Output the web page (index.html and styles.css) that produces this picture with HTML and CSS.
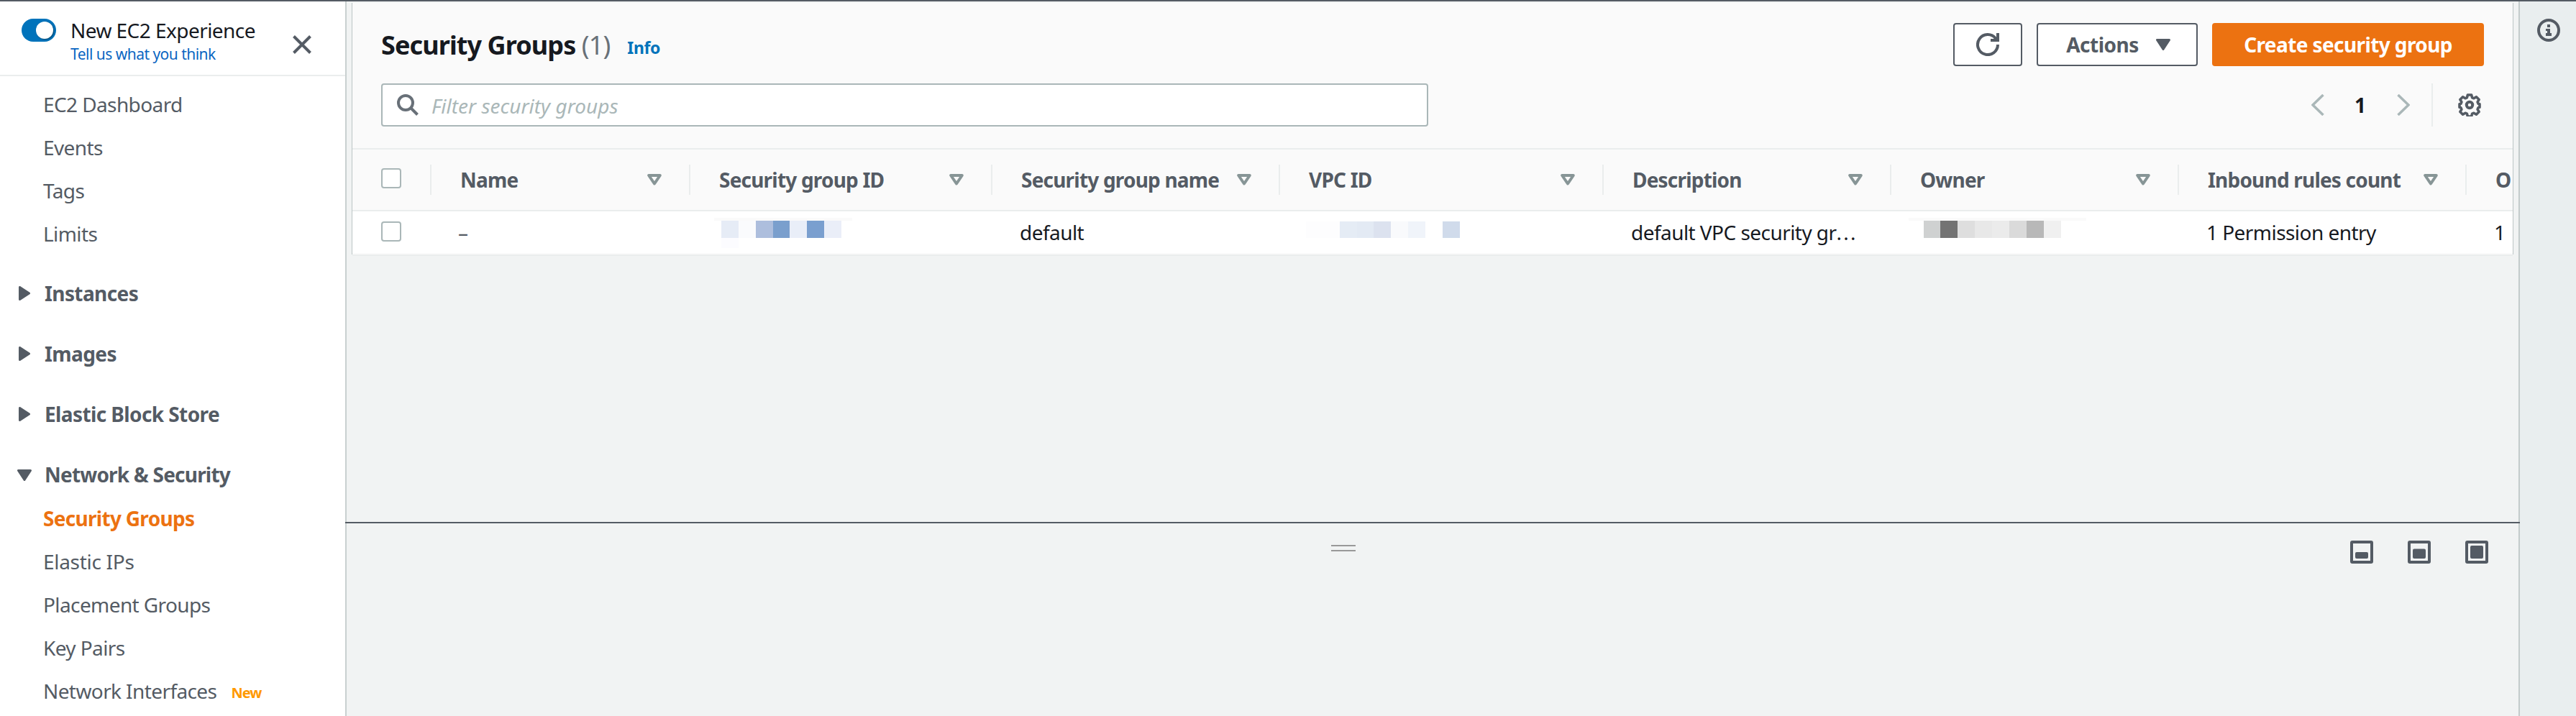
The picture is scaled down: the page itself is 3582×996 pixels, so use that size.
FILE: index.html
```html
<!DOCTYPE html>
<html lang="en">
<head>
<meta charset="utf-8">
<title>Security Groups | EC2</title>
<link rel="stylesheet" href="styles.css">
</head>
<body>
<svg class="defs" aria-hidden="true">
  <symbol id="sort" viewBox="0 0 20 16"><path d="M2.200 2h15.600L10 13.500z" fill="none" stroke="#879596" stroke-width="4" stroke-linejoin="round"/></symbol>
  <symbol id="right" viewBox="0 0 16 20"><path d="M1.500 1.500v17l13-8.500z" fill="#545b64" stroke="#545b64" stroke-width="3" stroke-linejoin="round"/></symbol>
  <symbol id="down" viewBox="0 0 20 16"><path d="M1.500 1.500h17L10 14.500z" fill="#545b64" stroke="#545b64" stroke-width="3" stroke-linejoin="round"/></symbol>
</svg>
<div class="app">
  <nav class="nav">
    <header class="nav-head">
      <span class="toggle"><i></i></span>
      <div class="nav-title">
        <div class="experience"><span>New EC2 Experience</span></div>
        <a class="feedback"><span>Tell us what you think</span></a>
      </div>
      <svg class="close" viewBox="0 0 26 26"><path d="M1.500 1.500l23 23M24.500 1.500l-23 23" stroke="#545b64" stroke-width="4"/></svg>
    </header>
    <ul class="links">
      <li><span>EC2 Dashboard</span></li><li><span>Events</span></li><li><span>Tags</span></li><li><span>Limits</span></li>
    </ul>
    <div class="sections">
      <div class="section"><svg class="tri-r"><use href="#right"/></svg><span>Instances</span></div>
      <div class="section"><svg class="tri-r"><use href="#right"/></svg><span>Images</span></div>
      <div class="section"><svg class="tri-r"><use href="#right"/></svg><span>Elastic Block Store</span></div>
      <div class="section"><svg class="tri-d"><use href="#down"/></svg><span class="tight">Network &amp; Security</span></div>
    </div>
    <ul class="links sub">
      <li class="active"><span>Security Groups</span></li><li class="wide"><span>Elastic IPs</span></li><li><span>Placement Groups</span></li><li><span>Key Pairs</span></li><li><span>Network Interfaces</span><b class="new">New</b></li>
    </ul>
  </nav>
  <main class="main">
    <section class="upper">
      <div class="card">
        <div class="title-row">
          <h1><span>Security Groups</span> <span class="count">(1)</span></h1>
          <a class="info">Info</a>
          <div class="actions">
            <button class="btn icon"><svg width="32" height="32" viewBox="0 0 32 32"><path d="M30 16a14 14 0 1 1-3-8.600l2 2.600M30 0v10H20" fill="none" stroke="#545b64" stroke-width="4"/></svg></button>
            <button class="btn menu"><span>Actions</span><svg class="tri-d"><use href="#down"/></svg></button>
            <button class="btn primary"><span>Create security group</span></button>
          </div>
        </div>
        <div class="filter-row">
          <div class="search"><svg width="30" height="30" viewBox="0 0 30 30"><circle cx="12" cy="12" r="10" fill="none" stroke="#687078" stroke-width="4"/><path d="M19 19l9.500 9.500" stroke="#687078" stroke-width="4"/></svg><span>Filter security groups</span></div>
          <div class="pager">
            <svg width="18" height="30" viewBox="0 0 18 30"><path d="M16.500 1L2 15l14.500 14" fill="none" stroke="#aab7b8" stroke-width="3.500"/></svg>
            <b>1</b>
            <svg width="18" height="30" viewBox="0 0 18 30"><path d="M1.500 1L16 15 1.500 29" fill="none" stroke="#aab7b8" stroke-width="3.500"/></svg>
          </div>
          <div class="prefs"><svg width="32" height="32" viewBox="0 0 32 32"><path d="M13.400 2h5.200l1 3.800 2.400 1 3.400-2 3.700 3.700-2 3.400 1 2.400 1.900.5v4.400l-1.900.5-1 2.400 2 3.400-3.700 3.700-3.400-2-2.400 1-1 3.800h-5.200l-1-3.800-2.400-1-3.400 2L2.900 25.500l2-3.400-1-2.400L2 19.200v-4.400l1.900-.5 1-2.400-2-3.400 3.700-3.700 3.400 2 2.400-1z" fill="none" stroke="#545b64" stroke-width="3.600" stroke-linejoin="round"/><circle cx="16" cy="16" r="4.200" fill="none" stroke="#545b64" stroke-width="4"/></svg></div>
        </div>
        <div class="grid head">
          <div class="check"><i></i></div>
          <div class="col"><span>Name</span><svg class="sort"><use href="#sort"/></svg></div>
          <div class="col"><span>Security group ID</span><svg class="sort"><use href="#sort"/></svg></div>
          <div class="col"><span>Security group name</span><svg class="sort"><use href="#sort"/></svg></div>
          <div class="col"><span>VPC ID</span><svg class="sort"><use href="#sort"/></svg></div>
          <div class="col"><span>Description</span><svg class="sort"><use href="#sort"/></svg></div>
          <div class="col"><span>Owner</span><svg class="sort"><use href="#sort"/></svg></div>
          <div class="col"><span>Inbound rules count</span><svg class="sort"><use href="#sort"/></svg></div>
          <div class="col last"><span>O</span></div>
        </div>
        <div class="grid row">
          <div class="check"><i></i></div>
          <div class="cell dash"><span>–</span></div>
          <div class="mosaic"><svg width="200" height="44" viewBox="993 302 200 44" shape-rendering="crispEdges"><path fill="#fafafa" d="M993 303h192v4H993z"/><path fill="#e6ecf6" d="M1003 307h24v24h-24z"/><path fill="#fafbfd" d="M1027 307h24v24h-24z"/><path fill="#adbedd" d="M1051 307h24v24h-24z"/><path fill="#7a9fcd" d="M1075 307h23v24h-23z"/><path fill="#e9eef8" d="M1098 307h24v24h-24z"/><path fill="#7a9fcf" d="M1122 307h24v24h-24z"/><path fill="#eaeef8" d="M1146 307h24v24h-24z"/><path fill="#fcfcff" d="M1003 331h24v14h-24z"/></svg></div>
          <div class="cell"><span>default</span></div>
          <div class="mosaic"><svg width="240" height="44" viewBox="1813 302 240 44" shape-rendering="crispEdges"><path fill="#fdfdfe" d="M1816 308h47v23h-47z"/><path fill="#e5ecf5" d="M1863 308h24v23h-24z"/><path fill="#e3eaf4" d="M1887 308h23v23h-23z"/><path fill="#dce2ef" d="M1910 308h24v23h-24z"/><path fill="#f9fafc" d="M1934 308h24v23h-24z"/><path fill="#f0f4fa" d="M1958 308h24v23h-24z"/><path fill="#d0dbeb" d="M2006 308h24v23h-24z"/></svg></div>
          <div class="cell"><span>default VPC security gr<span class="dots">...</span></span></div>
          <div class="mosaic"><svg width="260" height="44" viewBox="2663 302 260 44" shape-rendering="crispEdges" overflow="visible"><path fill="#fafafa" d="M2654 303h247v4h-247z"/><path fill="#cfd1d1" d="M2675 307h23v24h-23z"/><path fill="#737373" d="M2698 307h24v24h-24z"/><path fill="#dedede" d="M2722 307h24v24h-24z"/><path fill="#e8e8e8" d="M2746 307h24v24h-24z"/><path fill="#ebebeb" d="M2770 307h24v24h-24z"/><path fill="#dadada" d="M2794 307h24v24h-24z"/><path fill="#b8b8b8" d="M2818 307h24v24h-24z"/><path fill="#f0f0f0" d="M2842 307h24v24h-24z"/></svg></div>
          <div class="cell"><span>1 Permission entry</span></div>
          <div class="cell"><span>1</span></div>
        </div>
      </div>
    </section>
    <section class="split">
      <div class="handle"></div>
      <div class="sizes">
        <svg viewBox="0 0 32 32"><rect x="2" y="2" width="28" height="28" rx="1" fill="none" stroke="#545b64" stroke-width="4"/><rect x="7" y="16" width="18" height="9" rx="2" fill="#545b64"/></svg>
        <svg viewBox="0 0 32 32"><rect x="2" y="2" width="28" height="28" rx="1" fill="none" stroke="#545b64" stroke-width="4"/><rect x="7" y="11.500" width="18" height="13.500" rx="2" fill="#545b64"/></svg>
        <svg viewBox="0 0 32 32"><rect x="2" y="2" width="28" height="28" rx="1" fill="none" stroke="#545b64" stroke-width="4"/><rect x="7" y="7" width="18" height="18" rx="2" fill="#545b64"/></svg>
      </div>
    </section>
  </main>
  <aside class="tools"><svg width="32" height="32" viewBox="0 0 32 32"><circle cx="16" cy="16" r="14" fill="none" stroke="#545b64" stroke-width="4"/><path d="M14 8h4v4h-4zM12 14h6v6h2v4h-8v-4h2v-3h-2z" fill="#545b64"/></svg></aside>
</div>
</body>
</html>
```
FILE: styles.css
```css
* { box-sizing: border-box; }
body { margin: 0; background: #f1f3f3; color: #16191f; font: 28px/40px "Noto Sans", "Open Sans", sans-serif; letter-spacing: -0.6px; }
svg { display: block; flex: none; }
span, a { white-space: nowrap; }
.defs { position: absolute; width: 0; height: 0; }
.app { display: flex; height: 996px; border-top: 2px solid #545b64; overflow: hidden; }

.nav { width: 480px; flex: none; background: #fff; color: #545b64; }
.nav-head { display: flex; height: 104px; padding-left: 30px; border-bottom: 2px solid #eaeded; }
.toggle { width: 48px; height: 32px; margin-top: 24px; border-radius: 16px; background: #0073bb; padding: 4px; display: flex; justify-content: flex-end; flex: none; }
.toggle i { width: 24px; height: 24px; border-radius: 50%; background: #fff; box-shadow: 1px 1px 2px rgba(0, 28, 36, .5); }
.nav-title { width: 308px; padding: 20px 0 0 20px; flex: none; }
.experience { color: #16191f; line-height: 40px; letter-spacing: -0.55px; }
.feedback { display: block; color: #0a66c2; font-size: 21px; line-height: 26px; letter-spacing: -0.52px; }
.close { width: 26px; height: 26px; margin: 47px 0 0 21px; }
.links { list-style: none; margin: 0; padding: 9px 0 0 60px; line-height: 60px; }
.links li { height: 60px; display: flex; }
.links .wide { letter-spacing: -0.3px; }
.sub { padding-top: 1px; }
.links .active { color: #ec7211; font-weight: 700; letter-spacing: -0.7px; }
.new { margin-left: 20px; padding-top: 3px; color: #ff9900; font-size: 20px; letter-spacing: -0.9px; }
.sections { display: grid; gap: 24px; padding-top: 23px; }
.section { height: 60px; display: flex; align-items: center; font-weight: 700; line-height: 60px; }
.section .tight { letter-spacing: -0.8px; }
.tri-r { width: 16px; height: 20px; margin: 0 0 0 26px; }
.section .tri-r + span { padding-left: 20px; }
.tri-d { width: 20px; height: 16px; }
.section .tri-d { margin: 2px 0 0 24px; }
.section .tri-d + span { padding-left: 18px; }

.main { width: 3024px; flex: none; display: flex; flex-direction: column; box-shadow: inset 2px 0 #c9d0d0, inset -2px 0 #c3cbcb; }
.upper { height: 724px; padding: 2px 10px 0; flex: none; }
.card { height: 350px; background: #fafafa; box-shadow: -1px 0 #bcc5c5, 1px 0 #bcc5c5, 0 2px #eaeded; overflow: hidden; }
.title-row { display: flex; align-items: flex-start; height: 112px; padding: 28px 40px 0; }
h1 { margin: 0; font-size: 36px; line-height: 61px; letter-spacing: -0.9px; }
.count { font-weight: 400; color: #687078; }
.info { margin: 6px 0 0 24px; color: #0073bb; font-size: 23px; font-weight: 700; line-height: 56px; letter-spacing: -0.4px; }
.actions { margin-left: auto; display: flex; gap: 20px; }
.btn { height: 60px; border: 2px solid #545b64; border-radius: 4px; background: #fff; color: #545b64; font: inherit; font-weight: 700; letter-spacing: inherit; padding: 0; display: flex; align-items: center; justify-content: center; }
.icon { width: 96px; }
.menu { width: 224px; gap: 24px; padding-left: 3px; letter-spacing: -0.5px; }
.primary { width: 378px; color: #fff; background: #ec7211; border-color: #ec7211; }
.filter-row { display: flex; height: 90px; padding: 0 40px; }
.search { display: flex; align-items: center; width: 1456px; height: 60px; border: 2px solid #aab7b8; border-radius: 4px; background: #fff; padding-left: 20px; gap: 18px; color: #aab7b8; font-style: italic; letter-spacing: 0; }
.search span { padding-top: 2px; }
.pager { margin-left: auto; height: 60px; display: flex; align-items: center; gap: 45px; }
.pager b { width: 15px; margin: 0 -1px 0 -3px; }
.prefs { height: 60px; display: flex; align-items: center; border-left: 2px solid #eaeded; margin-left: 30px; padding: 0 4px 0 35px; }
.grid { display: grid; grid-template-columns: 110px 360px 420px 400px 450px 400px 400px 400px 64px; }
.head { height: 88px; border-top: 2px solid #eaeded; border-bottom: 2px solid #eaeded; color: #545b64; font-weight: 700; letter-spacing: -0.8px; align-items: center; }
.check, .col { height: 42px; border-right: 2px solid #eaeded; display: flex; align-items: center; }
.check { padding-left: 40px; }
.check i { width: 28px; height: 28px; border: 2px solid #aab7b8; border-radius: 4px; background: #fff; }
.head .check i { margin-bottom: 4px; }
.col { padding: 0 38px 0 40px; justify-content: space-between; }
.last { border: 0; padding-right: 0; }
.sort { width: 20px; height: 16px; }
.row { height: 58px; background: #fff; align-items: center; }
.row .check { border: 0; }
.row .check i { margin-bottom: 2px; }
.cell { padding-left: 38px; letter-spacing: -0.55px; }
.dash { padding-left: 37px; color: #545b64; }
.dots { letter-spacing: 2.2px; }
.mosaic { padding: 2px 0 0 33px; }

.split { flex: 1; border-top: 2px solid #545b64; padding-right: 44px; display: grid; grid-template-columns: 1fr auto; align-items: start; }
.handle { width: 34px; height: 9px; margin: 30px 0 0 1371px; border-top: 2px solid #999; border-bottom: 2px solid #999; }
.sizes { display: flex; gap: 48px; margin-top: 24px; }
.sizes svg { width: 32px; height: 32px; }
.tools { flex: 1; background: #e9eeef; padding: 24px 0 0 24px; }
```
